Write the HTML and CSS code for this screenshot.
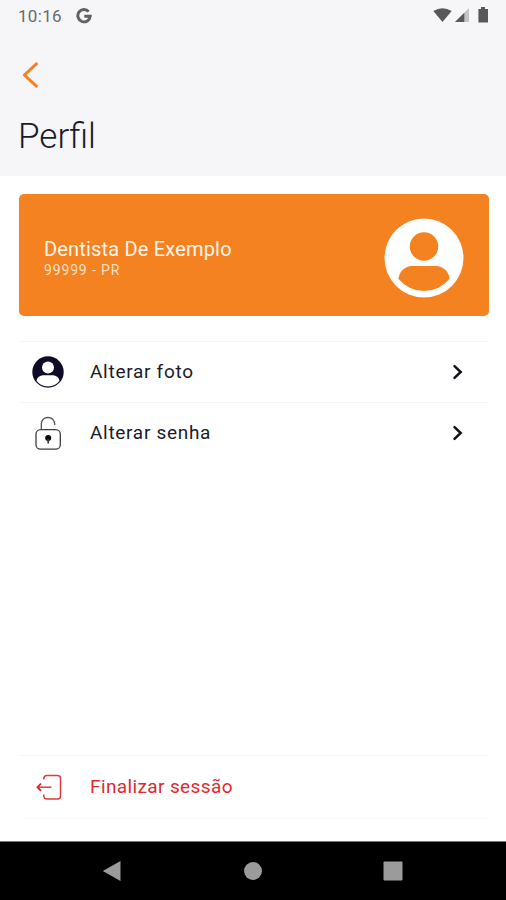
FILE: index.html
```html
<!DOCTYPE html>
<html lang="pt-BR">
<head>
<meta charset="UTF-8">
<meta name="viewport" content="width=device-width, initial-scale=1.0">
<title>Perfil</title>
<link rel="stylesheet" href="styles.css">
</head>
<body>

<div class="screen">
  <header class="header">
    <div class="status-bar">
      <span class="time">10:16</span>
      <svg class="google" width="16" height="16" viewBox="0 0 16 16">
        <path d="M12.7 3.6A6.2 6.2 0 1 0 14.2 8.3H8.3" fill="none" stroke="#606062" stroke-width="2.9"/>
      </svg>
      <svg class="status-icons" width="58" height="18" viewBox="0 0 58 18">
        <path d="M1.3 4Q10.5 -1.6 19.7 4L10.5 15Z" fill="#58585a"/>
        <path d="M23 15L37 1V15Z" fill="#c4c4c6"/>
        <path d="M23 15L32.3 5.7V15Z" fill="#58585a"/>
        <path d="M49 0h4v2h3v13.5h-9.600V2H49Z" fill="#58585a"/>
      </svg>
    </div>
    <a href="#" class="back">
      <svg width="18" height="28" viewBox="0 0 18 28">
        <path d="M14.400 2.800L2.400 14L14.400 25.200" fill="none" stroke="#f58220" stroke-width="3" stroke-linecap="round" stroke-linejoin="round"/>
      </svg>
    </a>
    <h1>Perfil</h1>
  </header>

  <main class="content">
    <div class="card">
      <div class="card-info">
        <div class="name">Dentista De Exemplo</div>
        <div class="code">99999 - PR</div>
      </div>
      <svg width="80" height="80" viewBox="0 0 80 80">
        <circle cx="40" cy="40" r="39.500" fill="#fff"/>
        <circle cx="40" cy="28.500" r="14.200" fill="#f58220"/>
        <path d="M27 48H53C60 49 65 54 65.500 61Q55 73 40 73Q25 73 14.500 61C15 54 20 49 27 48Z" fill="#f58220"/>
      </svg>
    </div>

    <nav class="menu">
      <a href="#" class="row">
        <svg class="icon" width="32" height="32" viewBox="0 0 32 32">
          <circle cx="16" cy="16" r="15.700" fill="#0e0b29"/>
          <circle cx="16" cy="11.500" r="6" fill="#fff"/>
          <path d="M10.500 19.300H21.500C25 19.800 27.200 22 27.500 24.800Q23.500 30.500 16 30.500Q8.500 30.500 4.500 24.800C4.800 22 7 19.800 10.500 19.300Z" fill="#fff"/>
        </svg>
        <span class="label foto">Alterar foto</span>
        <svg class="chevron" width="12" height="16" viewBox="0 0 12 16">
          <path d="M2.500 2.200L8.700 8L2.500 13.800" fill="none" stroke="#111018" stroke-width="2.500" stroke-linecap="round"/>
        </svg>
      </a>
      <a href="#" class="row">
        <svg class="icon" width="32" height="36" viewBox="0 0 32 36">
          <rect x="4" y="14.600" width="24.300" height="19.600" rx="4.500" fill="none" stroke="#3c3c42" stroke-width="1.300"/>
          <path d="M9.300 14.500V9Q9.800 2.800 16 2.400Q22 2.800 22.700 9V10" fill="none" stroke="#55555a" stroke-width="1.300"/>
          <circle cx="16.200" cy="23" r="3" fill="#08080d"/>
          <path d="M16.200 24V28.500" stroke="#38383e" stroke-width="1.700"/>
        </svg>
        <span class="label senha">Alterar senha</span>
        <svg class="chevron" width="12" height="16" viewBox="0 0 12 16">
          <path d="M2.500 2.200L8.700 8L2.500 13.800" fill="none" stroke="#111018" stroke-width="2.500" stroke-linecap="round"/>
        </svg>
      </a>
    </nav>

    <a href="#" class="row logout">
      <svg class="icon" width="32" height="32" viewBox="0 0 32 32">
        <path d="M11.800 8.500V7.500Q12 4.500 15 4.500H25.500Q28.500 4.500 28.500 7.500V25Q28.500 28 25.500 28H15Q12 28 11.800 25V23.500" fill="none" stroke="#e23a3e" stroke-width="1.500"/>
        <path d="M7 16.200H19.500" stroke="#e23a3e" stroke-width="1.500"/>
        <path d="M9 12.500L5.500 16.200L9 19.900" fill="none" stroke="#d91f2a" stroke-width="1.800"/>
      </svg>
      <span class="label sessao">Finalizar sessão</span>
    </a>
  </main>

  <footer class="nav-bar">
    <svg width="20" height="22" viewBox="0 0 20 22">
      <path d="M0.800 11L18.500 1V21Z" fill="#9b9b9b"/>
    </svg>
    <svg width="20" height="22" viewBox="0 0 20 22">
      <circle cx="10" cy="11" r="9" fill="#9b9b9b"/>
    </svg>
    <svg width="20" height="22" viewBox="0 0 20 22">
      <rect x="0.500" y="1.500" width="19" height="19" rx="1" fill="#9b9b9b"/>
    </svg>
  </footer>
</div>

</body>
</html>
```
FILE: styles.css
```css
body {
  margin: 0;
  font-family: Roboto, "Liberation Sans", sans-serif;
  color: #1b1a2b;
  background-color: #ffffff;
}
a {
  color: inherit;
  text-decoration: none;
}
svg {
  display: block;
  flex-shrink: 0;
}
.screen {
  display: flex;
  flex-direction: column;
  height: 900px;
  overflow: hidden;
}
.header {
  height: 176px;
  background-color: #f6f6f8;
}
.status-bar {
  display: flex;
  align-items: center;
  height: 32px;
  padding: 0 16px 0 18px;
}
.time {
  width: 58px;
  font-size: 17px;
  letter-spacing: 0.3px;
  color: #6a6a6c;
}
.status-icons {
  margin-left: auto;
}
.back {
  display: block;
  width: 18px;
  margin: 29px 0 0 22px;
}
h1 {
  margin: 27px 0 0 18px;
  font-size: 35px;
  line-height: 42px;
  font-weight: 300;
}
.content {
  display: flex;
  flex-direction: column;
  flex: 1;
  padding: 18px 17px 22px 19px;
}
.card {
  display: flex;
  justify-content: space-between;
  align-items: center;
  height: 122px;
  padding: 0 25px 0 25px;
  box-sizing: border-box;
  border-radius: 5px;
  background-color: #f58220;
  color: #fff4ea;
}
.card svg {
  margin-top: 5px;
}
.card-info {
  padding-top: 5px;
}
.name {
  font-size: 20px;
  line-height: 24px;
  letter-spacing: 0.18px;
}
.code {
  font-size: 14px;
  line-height: 18px;
  letter-spacing: 0.85px;
  color: #ffdfc2;
}
.menu {
  margin-top: 25px;
}
.row {
  display: flex;
  align-items: center;
  height: 60px;
  padding: 0 25px 0 13px;
  border-top: 1px solid #f5f5f5;
}
.label {
  margin-left: 26px;
  font-size: 19px;
  line-height: 24px;
}
.foto {
  letter-spacing: 0.72px;
}
.senha {
  letter-spacing: 0.7px;
}
.sessao {
  letter-spacing: 0.38px;
}
.chevron {
  margin-left: auto;
}
.logout {
  height: 62px;
  margin-top: auto;
  border-bottom: 1px solid #fafafa;
  color: #e12a2f;
}
.nav-bar {
  display: flex;
  justify-content: space-between;
  align-items: center;
  height: 59px;
  padding: 0 103px 0 102px;
  box-sizing: border-box;
  border-top: 1px solid #777777;
  background-color: #000000;
}
```
